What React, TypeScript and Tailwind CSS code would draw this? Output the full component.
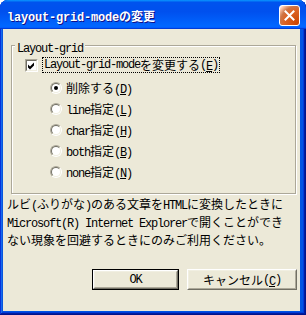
import React from 'react';

// MS Gothic look: half-width Latin at 6px advance, full-width kana/kanji at 12px
const Txt = ({ s }: { s: string }) => {
  const parts = s.match(/[\x20-\x7e]+|[^\x20-\x7e]+/g) || [];
  return (
    <>
      {parts.map((p, i) =>
        /^[\x20-\x7e]/.test(p) ? (
          <span key={i} className="font-['Liberation_Mono'] text-[12px] tracking-[-1.2px]">
            {p}
          </span>
        ) : (
          <span key={i} className="text-[12px]">
            {p}
          </span>
        )
      )}
    </>
  );
};

// "&X" marks the mnemonic letter
const Label = ({ text }: { text: string }) => {
  const idx = text.indexOf('&');
  if (idx < 0) return <Txt s={text} />;
  return (
    <>
      <Txt s={text.slice(0, idx)} />
      <span className="underline underline-offset-[1px]">
        <Txt s={text.charAt(idx + 1)} />
      </span>
      <Txt s={text.slice(idx + 2)} />
    </>
  );
};

const Radio = ({ checked, label }: { checked?: boolean; label: string }) => (
  <div className="flex h-[21px] items-center">
    <div className="h-[12px] w-[12px] rounded-full border border-t-[#aca899] border-l-[#aca899] border-b-white border-r-white">
      <div className="flex h-full w-full items-center justify-center rounded-full border border-t-[#716f64] border-l-[#716f64] border-b-[#f1efe2] border-r-[#f1efe2] bg-white">
        {checked && <div className="h-[4px] w-[4px] rounded-full bg-black" />}
      </div>
    </div>
    <div className="ml-[4px] leading-[14px]">
      <Label text={label} />
    </div>
  </div>
);

const Button = ({ label, isDefault, width }: { label: string; isDefault?: boolean; width: string }) => (
  <div className={isDefault ? `${width} h-[21px] border border-black` : `${width} h-[21px]`}>
    <div className="h-full w-full border border-t-white border-l-white border-b-[#716f64] border-r-[#716f64]">
      <div className="flex h-full w-full items-center justify-center border border-t-[#f1efe2] border-l-[#f1efe2] border-b-[#aca899] border-r-[#aca899] leading-[14px]">
        <Label text={label} />
      </div>
    </div>
  </div>
);

const radios = [
  { label: '削除する(&D)', checked: true },
  { label: 'line指定(&L)' },
  { label: 'char指定(&H)' },
  { label: 'both指定(&B)' },
  { label: 'none指定(&N)' },
];

export default function App() {
  return (
    <div className="h-[315px] w-[306px] bg-white font-['Noto_Sans_CJK_JP',sans-serif] text-black">
      <div className="flex h-full flex-col overflow-hidden rounded-t-[8px] bg-[#0054e3] pb-[4px] shadow-[inset_-1px_-1px_#00138c,inset_1px_1px_#0831d9,inset_-2px_-2px_#001ea0,inset_2px_2px_#166aee,inset_-3px_-3px_#003bda,inset_3px_3px_#0855dd]">
        {/* title bar */}
        <div className="flex h-[29px] shrink-0 items-center justify-between bg-[linear-gradient(180deg,#0997ff,#0053ee_8%,#0050ee_40%,#0066ff_88%,#0066ff_93%,#005bff_95%,#003dd7_96%,#003dd7)] pl-[7px] pr-[6px] pt-[2px]">
          <div className="font-bold leading-[14px] text-white [text-shadow:1px_1px_0_#0f1089]">
            <span className="font-['Liberation_Mono'] text-[12px] tracking-[-0.2px]">layout-grid-mode</span>
            <span className="text-[12px]">の変更</span>
          </div>
          <div className="flex h-[21px] w-[21px] items-center justify-center rounded-[3px] border border-white bg-[radial-gradient(circle_at_90%_90%,#cc4600_0%,#dc6527_55%,#cd7546_70%,#ffccb2_90%,#ffffff_100%)]">
            <svg width="11" height="11" viewBox="0 0 11 11">
              <path d="M1.5 1.5 L9.5 9.5 M9.5 1.5 L1.5 9.5" stroke="#fff" strokeWidth="2" strokeLinecap="square" />
            </svg>
          </div>
        </div>

        {/* body */}
        <div className="ml-[3px] mr-[6px] flex flex-1 flex-col bg-[#ece9d8]">
          <div className="relative ml-[8px] mt-[16px] h-[149px] w-[285px] border border-[#aca899] pl-[13px] pt-[11px] shadow-[inset_1px_1px_0_#fff,1px_1px_0_#fff]">
            <div className="absolute left-[3px] top-[-8px] bg-[#ece9d8] px-[2px] leading-[14px]">
              <Txt s="Layout-grid" />
            </div>

            <div className="flex h-[16px] items-center">
              <div className="h-[13px] w-[13px] border border-t-[#aca899] border-l-[#aca899] border-b-white border-r-white">
                <div className="h-full w-full border border-t-[#716f64] border-l-[#716f64] border-b-[#f1efe2] border-r-[#f1efe2] bg-white">
                  <svg width="9" height="9" viewBox="0 0 9 9" className="block">
                    <polygon points="1,3.5 3,5.5 7,1.5 7,4.5 3,8.5 1,6.5" fill="#000" />
                  </svg>
                </div>
              </div>
              <div className="ml-[4px] flex h-[16px] items-center border border-dotted border-black px-[1px] leading-[14px]">
                <Label text="Layout-grid-modeを変更する(&E)" />
              </div>
            </div>

            <div className="ml-[25px] mt-[4px] flex flex-col">
              {radios.map((r) => (
                <Radio key={r.label} label={r.label} checked={r.checked} />
              ))}
            </div>
          </div>

          <div className="ml-[4px] mt-[1px] leading-[14px]">
            <div><Txt s="ルビ(ふりがな)のある文章をHTMLに変換したときに" /></div>
            <div><Txt s="Microsoft(R) Internet Explorerで開くことができ" /></div>
            <div><Txt s="ない現象を回避するときにのみご利用ください。" /></div>
          </div>

          <div className="mb-[21px] mr-[3px] mt-auto flex justify-end gap-[8px]">
            <Button label="OK" isDefault width="w-[87px]" />
            <Button label="キャンセル(&C)" width="w-[110px]" />
          </div>
        </div>
      </div>
    </div>
  );
}
